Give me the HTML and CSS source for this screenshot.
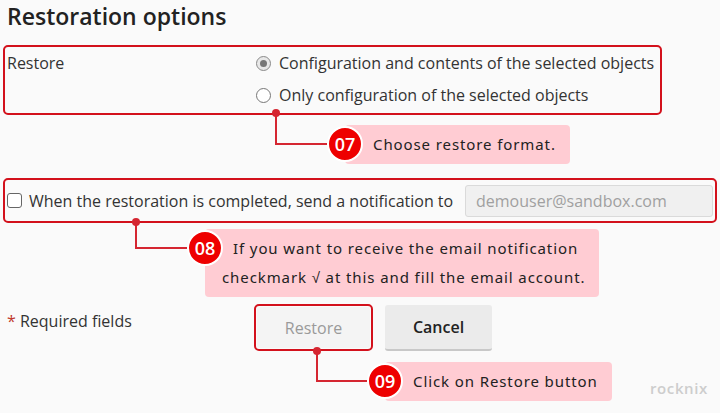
FILE: index.html
```html
<!DOCTYPE html>
<html lang="en">
<head>
<meta charset="utf-8">
<title>Restoration options</title>
<link rel="stylesheet" href="styles.css">
</head>
<body>
<main class="page">
  <h1 class="title">Restoration options</h1>

  <div class="hl field restore-field">
    <span class="label">Restore</span>
    <div class="radios">
      <label class="opt"><span class="radio checked"></span>Configuration and contents of the selected objects</label>
      <label class="opt"><span class="radio"></span>Only configuration of the selected objects</label>
    </div>
  </div>

  <div class="callout c07">
    <span class="lead lead-07"></span>
    <span class="badge">07</span>Choose restore format.
  </div>

  <div class="hl notify-field">
    <span class="checkbox"></span>
    <span class="notify-text">When the restoration is completed, send a notification to</span>
    <span class="input">demouser@sandbox.com</span>
  </div>

  <div class="callout c08">
    <span class="lead lead-08"></span>
    <span class="badge">08</span>If you want to receive the email notification<br>checkmark √ at this and fill the email account.
  </div>

  <div class="actions">
    <span class="required"><span class="star">*</span> Required fields</span>
    <div class="buttons">
      <span class="hl-btn"><span class="btn btn-restore">Restore</span></span>
      <span class="btn btn-cancel">Cancel</span>
    </div>
  </div>

  <div class="callout c09">
    <span class="lead lead-09"></span>
    <span class="badge">09</span>Click on Restore button
  </div>

  <span class="watermark">rocknix</span>
</main>
</body>
</html>
```

FILE: styles.css
```css
* { box-sizing: border-box; }
html, body { margin: 0; padding: 0; }
body {
  background: #fafafa;
  font-family: "Open Sans", "Noto Sans", sans-serif;
  color: #333;
  width: 720px;
  height: 413px;
  overflow: hidden;
}
.page {
  position: relative;
  height: 413px;
  padding-left: 3px;
}
.title {
  margin: 1px 0 0 4px;
  font-size: 23px;
  line-height: 30px;
  font-weight: 600;
  color: #222;
}
.hl {
  border: 2px solid #d3111c;
  border-radius: 5px;
}
.restore-field {
  margin-top: 14px;
  width: 659px;
  height: 70px;
  display: grid;
  grid-template-columns: 249px 1fr;
  padding-left: 2px;
  font-size: 16px;
}
.label { line-height: 32px; }
.radios { display: flex; flex-direction: column; }
.opt {
  display: flex;
  align-items: center;
  height: 32px;
  gap: 8px;
}
.radio {
  width: 15px;
  height: 15px;
  border-radius: 50%;
  border: 1px solid #777;
  background: #fff;
  display: inline-block;
  position: relative;
}
.radio.checked { border-color: #8a8a8a; background: #e8e8e8; }
.radio.checked::after {
  content: "";
  position: absolute;
  left: 3px; top: 3px;
  width: 7px; height: 7px;
  border-radius: 50%;
  background: #777;
}

.callout {
  position: relative;
  width: fit-content;
  white-space: nowrap;
  background: #ffccd3;
  border-radius: 4px;
  padding: 5px 14px 5px 17px;
  font-family: "Noto Sans", sans-serif;
  font-size: 15px;
  line-height: 29px;
  letter-spacing: 0.9px;
  color: #222;
}
.badge {
  float: left;
  width: 36px;
  height: 36px;
  margin: -4px 10px -12px -35px;
  border-radius: 50%;
  background: #ee0000;
  border: 2px solid #fff;
  color: #fff;
  font-family: "Open Sans", sans-serif;
  font-weight: 600;
  font-size: 18px;
  letter-spacing: 0;
  line-height: 32px;
  text-align: center;
}
.lead {
  position: absolute;
  border-left: 2px solid #d52631;
  border-bottom: 2px solid #d52631;
}
.lead::before {
  content: "";
  position: absolute;
  left: -5px;
  top: -4px;
  width: 8px;
  height: 8px;
  border-radius: 50%;
  background: #d52631;
}
.c07 { margin: 10px 0 0 342px; }
.lead-07 { left: -70px; top: -12px; width: 52px; height: 32px; }
.c08 { margin: 6px 0 0 202px; }
.lead-08 { left: -70px; top: -7px; width: 52px; height: 27px; }
.c09 { margin: 11px 0 0 382px; }
.lead-09 { left: -69px; top: -11px; width: 51px; height: 31px; }

.notify-field {
  margin-top: 14px;
  width: 714px;
  height: 45px;
  display: flex;
  align-items: center;
  padding: 0 2px 0 2px;
  font-size: 16px;
}
.checkbox {
  width: 15px;
  height: 15px;
  border: 1.5px solid #666;
  border-radius: 3px;
  background: #fff;
  margin-right: 7px;
}
.notify-text { flex: none; }
.input {
  margin-left: auto;
  width: 248px;
  height: 32px;
  background: #f0f0f0;
  border: 1px solid #dadada;
  border-radius: 3px;
  padding-left: 10px;
  line-height: 30px;
  color: #a0a0a0;
}

.actions {
  margin-top: 7px;
  display: grid;
  grid-template-columns: 247px auto;
  padding-left: 4px;
  font-size: 16px;
}
.required { line-height: 34px; }
.star { color: #c0392b; }
.buttons { display: flex; gap: 12px; align-items: flex-start; }
.hl-btn {
  border: 2px solid #d3111c;
  border-radius: 5px;
  width: 119px;
  height: 47px;
  padding: 1px;
  display: flex;
}
.btn {
  display: flex;
  align-items: center;
  justify-content: center;
  font-size: 16px;
  border-radius: 3px;
}
.btn-restore {
  flex: 1;
  background: #f4f4f4;
  color: #9a9a9a;
}
.btn-cancel {
  width: 107px;
  height: 46px;
  margin-top: 1px;
  background: #ebebeb;
  border-bottom: 2px solid #c8c8c8;
  color: #222;
  font-weight: 600;
}
.watermark {
  position: absolute;
  left: 650px;
  top: 377px;
  font-family: "Open Sans", sans-serif;
  font-weight: 600;
  font-size: 15px;
  letter-spacing: 0.6px;
  color: #cdcdcd;
}
```
